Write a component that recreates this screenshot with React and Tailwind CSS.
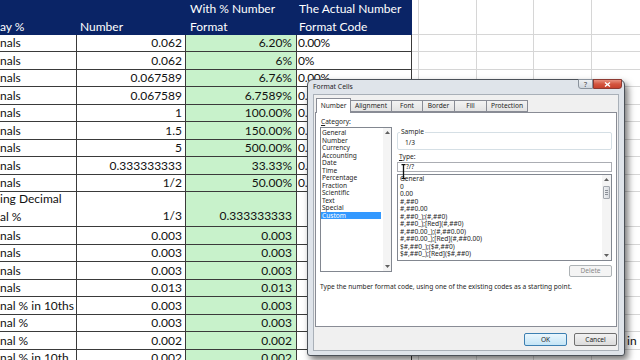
import React from "react";

const rows = [
  { h: "h-[17px]", a: "nals", b: "0.062", c: "6.20%", d: "0.00%" },
  { h: "h-[18px]", a: "nals", b: "0.062", c: "6%", d: "0%" },
  { h: "h-[17px]", a: "nals", b: "0.067589", c: "6.76%", d: "0.00%" },
  { h: "h-[18px]", a: "nals", b: "0.067589", c: "6.7589%", d: "0.00%" },
  { h: "h-[17px]", a: "nals", b: "1", c: "100.00%", d: "0.00%" },
  { h: "h-[18px]", a: "nals", b: "1.5", c: "150.00%", d: "0.00%" },
  { h: "h-[17px]", a: "nals", b: "5", c: "500.00%", d: "0.00%" },
  { h: "h-[18px]", a: "nals", b: "0.333333333", c: "33.33%", d: "0.00%" },
  { h: "h-[17px]", a: "nals", b: "1/2", c: "50.00%", d: "0.00%" },
  { h: "h-[35px]", a: ["ing Decimal", "al %"], b: "1/3", c: "0.333333333", d: "" },
  { h: "h-[18px]", a: "nals", b: "0.003", c: "0.003", d: "" },
  { h: "h-[17px]", a: "nals", b: "0.003", c: "0.003", d: "" },
  { h: "h-[18px]", a: "nals", b: "0.003", c: "0.003", d: "" },
  { h: "h-[17px]", a: "nals", b: "0.013", c: "0.013", d: "" },
  { h: "h-[18px]", a: "nal % in 10ths", b: "0.003", c: "0.003", d: "" },
  { h: "h-[17px]", a: "nal %", b: "0.003", c: "0.003", d: "" },
  { h: "h-[18px]", a: "nal %", b: "0.002", c: "0.002", d: "", extra: "in" },
  { h: "h-[17px]", a: "nal % in 10th", b: "0.002", c: "0.002", d: "" },
];

const categories = [
  "General", "Number", "Currency", "Accounting", "Date", "Time",
  "Percentage", "Fraction", "Scientific", "Text", "Special", "Custom",
];

const types = [
  "General", "0", "0.00", "#,##0", "#,##0.00", "#,##0_);(#,##0)",
  "#,##0_);[Red](#,##0)", "#,##0.00_);(#,##0.00)", "#,##0.00_);[Red](#,##0.00)",
  "$#,##0_);($#,##0)", "$#,##0_);[Red]($#,##0)",
];

function GridCells({ extra }) {
  return (
    <>
      <div className="w-[7px] shrink-0 border-b border-r border-[#d6d6d6]" />
      <div className="w-[58px] shrink-0 border-b border-r border-[#d6d6d6]" />
      <div className="w-[57px] shrink-0 border-b border-r border-[#d6d6d6]" />
      <div className="w-[58px] shrink-0 border-b border-r border-[#d6d6d6]" />
      <div className="w-[57px] shrink-0 border-b border-r border-[#d6d6d6] flex items-center pl-[35px] overflow-hidden whitespace-nowrap">
        {extra ? <span>{extra}</span> : null}
      </div>
    </>
  );
}

function Row({ r }) {
  const multi = Array.isArray(r.a);
  const align = multi ? "items-end pb-[1px]" : "items-center";
  return (
    <div className={`flex ${r.h}`}>
      <div className={`w-[77px] shrink-0 border-b border-r border-[#3a3a3a] flex ${align} overflow-hidden whitespace-nowrap`}>
        {multi ? (
          <div className="flex flex-col leading-[17.5px]">
            <span>{r.a[0]}</span>
            <span>{r.a[1]}</span>
          </div>
        ) : (
          <span>{r.a}</span>
        )}
      </div>
      <div className={`w-[109px] shrink-0 border-b border-r border-[#3a3a3a] flex ${align} justify-end pr-[3px] whitespace-nowrap`}>
        {r.b}
      </div>
      <div className={`w-[111px] shrink-0 border-b border-r border-[#3a3a3a] bg-[#c8f2cb] flex ${align} justify-end pr-[4px] whitespace-nowrap`}>
        {r.c}
      </div>
      <div className={`w-[115px] shrink-0 border-b border-r border-[#3a3a3a] flex ${align} pl-[1px] overflow-hidden whitespace-nowrap tracking-[-0.3px]`}>
        {r.d}
      </div>
      <GridCells extra={r.extra} />
    </div>
  );
}

function Sheet() {
  return (
    <div className="flex flex-col font-['Lato',sans-serif] text-[12px] text-[#111]">
      <div className="flex h-[35px]">
        <div className="w-[412px] shrink-0 flex bg-[#0a2466] text-white leading-[17.5px]">
          <div className="w-[77px] shrink-0 flex items-end overflow-hidden whitespace-nowrap">
            <span>ay %</span>
          </div>
          <div className="w-[109px] shrink-0 flex items-end pl-[3px]">
            <span>Number</span>
          </div>
          <div className="w-[111px] shrink-0 flex flex-col pl-[4px]">
            <span>With % Number</span>
            <span>Format</span>
          </div>
          <div className="w-[115px] shrink-0 flex flex-col pl-[2px] whitespace-nowrap">
            <span>The Actual Number</span>
            <span>Format Code</span>
          </div>
        </div>
        <GridCells />
      </div>
      {rows.map((r, i) => (
        <Row key={i} r={r} />
      ))}
    </div>
  );
}

function UpArrow() {
  return (
    <svg width="5" height="3" viewBox="0 0 5 3">
      <path d="M0 3 L2.5 0 L5 3 Z" fill="#606060" />
    </svg>
  );
}

function DownArrow() {
  return (
    <svg width="5" height="3" viewBox="0 0 5 3">
      <path d="M0 0 L2.5 3 L5 0 Z" fill="#606060" />
    </svg>
  );
}

function Dialog() {
  return (
    <div className="absolute left-[307px] top-[79px] w-[318px] h-[277px] rounded-t-[6px] rounded-b-[3px] border border-[#4b5158] bg-[#dfe4ea] shadow-[3px_4px_7px_rgba(0,0,0,0.55)] font-['Noto_Sans',sans-serif] text-[6.6px] text-[#1e1e1e]">
      {/* title bar */}
      <div className="relative h-[14px] pl-[5px] flex items-center">
        <span className="text-[6.8px] text-[#222]">Format Cells</span>
        <div className="absolute right-[2px] top-[-1px] flex">
          <div className="w-[15px] h-[10px] rounded-bl-[3px] border border-[#8a929c] bg-gradient-to-b from-[#eef1f4] to-[#cfd6de] flex items-center justify-center text-[7px] leading-none text-[#444]">
            ?
          </div>
          <div className="w-[29px] h-[10px] rounded-br-[3px] border border-[#8c3a32] bg-gradient-to-b from-[#e7907f] via-[#d4553f] to-[#c7412c] flex items-center justify-center">
            <svg width="7" height="5" viewBox="0 0 7 5">
              <path d="M1 0.5 L6 4.5 M6 0.5 L1 4.5" stroke="white" strokeWidth="1.4" />
            </svg>
          </div>
        </div>
      </div>

      {/* client area */}
      <div className="mx-[5px] h-[257px] bg-[#f0f0f0] border border-[#a9b0b8] flex flex-col">
        {/* tabs */}
        <div className="flex items-end h-[17px] pl-[2px] relative z-10">
          <div className="w-[35px] h-[15px] -mb-px bg-white border border-b-0 border-[#898c95] flex items-center justify-center pb-[1px]">
            Number
          </div>
          <div className="w-[41px] h-[12px] bg-gradient-to-b from-[#f3f3f3] to-[#e3e3e3] border border-l-0 border-[#898c95] flex items-center justify-center">
            Alignment
          </div>
          <div className="w-[31px] h-[12px] bg-gradient-to-b from-[#f3f3f3] to-[#e3e3e3] border border-l-0 border-[#898c95] flex items-center justify-center">
            Font
          </div>
          <div className="w-[32px] h-[12px] bg-gradient-to-b from-[#f3f3f3] to-[#e3e3e3] border border-l-0 border-[#898c95] flex items-center justify-center">
            Border
          </div>
          <div className="w-[32px] h-[12px] bg-gradient-to-b from-[#f3f3f3] to-[#e3e3e3] border border-l-0 border-[#898c95] flex items-center justify-center">
            Fill
          </div>
          <div className="w-[41px] h-[12px] bg-gradient-to-b from-[#f3f3f3] to-[#e3e3e3] border border-l-0 border-[#898c95] flex items-center justify-center">
            Protection
          </div>
        </div>

        {/* tab panel */}
        <div className="mx-[1px] h-[215px] bg-white border border-[#898c95] flex flex-col px-[4px] pt-[5px]">
          <div className="flex gap-[5px]">
            {/* category */}
            <div className="w-[72px] flex flex-col">
              <div className="h-[8px] leading-[8px] pl-[1px]">
                <span className="underline">C</span>ategory:
              </div>
              <div className="mt-[1px] h-[145px] border border-[#828790] flex">
                <div className="flex-1 flex flex-col pt-[1px] leading-[7.5px]">
                  {categories.map((c) => (
                    <div
                      key={c}
                      className={
                        c === "Custom"
                          ? "h-[7.5px] pl-[1px] bg-[#3399ff] text-white"
                          : "h-[7.5px] pl-[1px]"
                      }
                    >
                      {c}
                    </div>
                  ))}
                </div>
                <div className="w-[8px] ml-[2px] bg-[#f4f4f4] flex flex-col items-center justify-between py-[3px]">
                  <UpArrow />
                  <DownArrow />
                </div>
              </div>
            </div>

            {/* right side */}
            <div className="w-[215px] flex flex-col">
              <div className="relative mt-[14px] h-[18px] border border-[#d5dfe5] rounded-[2px] pl-[7px] pt-[6px] leading-[8px]">
                <span className="absolute left-[2px] top-[-5px] bg-white px-[1px] leading-[8px]">Sample</span>
                1/3
              </div>
              <div className="mt-[3px] h-[8px] leading-[8px] pl-[2px]">
                <span className="underline">T</span>ype:
              </div>
              <div className="relative mt-[1px] h-[10px] border border-[#abadb3] flex items-center pl-[8px] leading-none">
                ?/?
                <svg className="absolute left-[3px] top-[1px]" width="5" height="15" viewBox="0 0 5 15">
                  <path d="M0.5 0.7 H4.5 M2.5 0.7 V14.3 M0.5 14.3 H4.5" stroke="#111" strokeWidth="1.3" fill="none" />
                </svg>
              </div>
              <div className="mt-[2px] h-[87px] border border-[#828790] flex">
                <div className="flex-1 flex flex-col pl-[2px] leading-[7.5px] whitespace-nowrap overflow-hidden">
                  {types.map((t) => (
                    <div key={t} className="h-[7.5px]">
                      {t}
                    </div>
                  ))}
                </div>
                <div className="w-[9px] bg-[#f4f4f4] flex flex-col items-center py-[3px]">
                  <UpArrow />
                  <div className="mt-[5px] w-[7px] h-[13px] rounded-[1px] border border-[#a3a8ae] bg-gradient-to-r from-[#eef0f2] to-[#d8dbe0] flex flex-col items-center justify-center gap-[1px]">
                    <div className="w-[3px] h-px bg-[#8a8f96]" />
                    <div className="w-[3px] h-px bg-[#8a8f96]" />
                    <div className="w-[3px] h-px bg-[#8a8f96]" />
                  </div>
                  <div className="flex-1" />
                  <DownArrow />
                </div>
              </div>
              <div className="self-end mt-[4px] w-[43px] h-[12px] rounded-[2px] border border-[#adb2b5] bg-[#f4f4f4] text-[#8a8a8a] flex items-center justify-center">
                Delete
              </div>
            </div>
          </div>
          <div className="mt-[6px] h-[8px] leading-[8px] whitespace-nowrap">
            Type the number format code, using one of the existing codes as a starting point.
          </div>
        </div>

        {/* buttons */}
        <div className="mt-[6px] flex justify-end gap-[7px] pr-[1px]">
          <div className="w-[43px] h-[13px] rounded-[2px] border border-[#3c7fb1] bg-gradient-to-b from-[#eaf6fd] to-[#c4e5f6] flex items-center justify-center">
            OK
          </div>
          <div className="w-[43px] h-[13px] rounded-[2px] border border-[#707070] bg-gradient-to-b from-[#f2f2f2] to-[#dcdcdc] flex items-center justify-center">
            Cancel
          </div>
        </div>
      </div>
    </div>
  );
}

export default function App() {
  return (
    <div className="relative w-[640px] h-[360px] overflow-hidden bg-white">
      <Sheet />
      <Dialog />
    </div>
  );
}
